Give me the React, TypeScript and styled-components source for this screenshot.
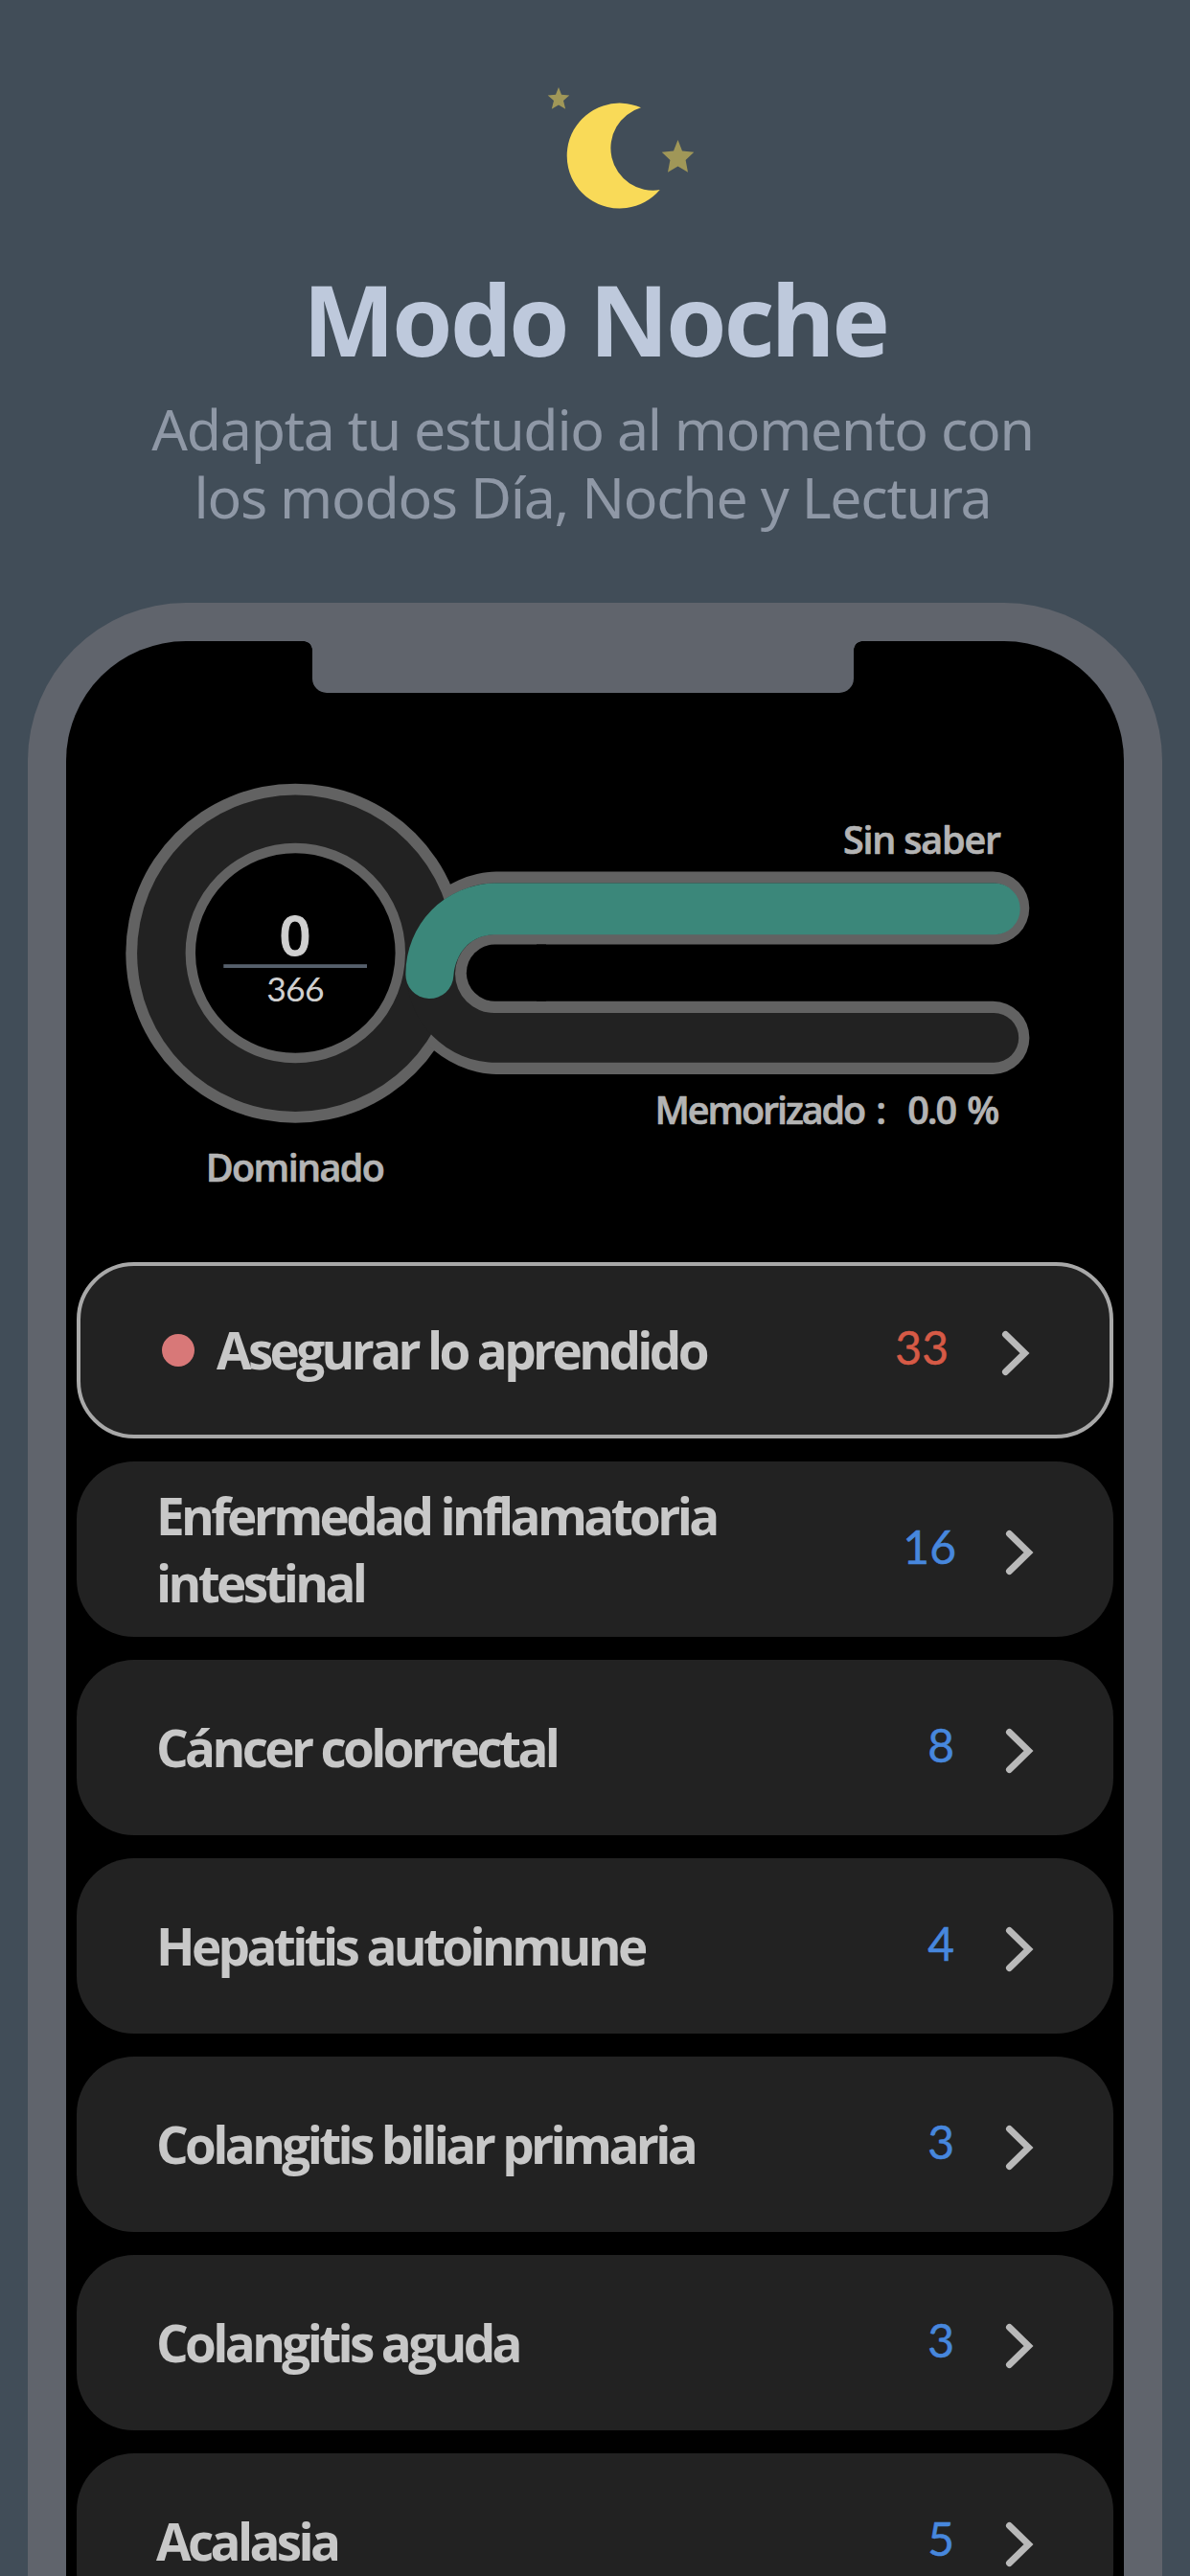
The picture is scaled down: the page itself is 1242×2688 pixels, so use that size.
import React, {FC} from 'react';
import styled, {createGlobalStyle} from 'styled-components';

const GlobalStyle = createGlobalStyle`
  body {
    margin: 0;
    background-color: #414d58;
  }
`;

const Page = styled.div`
  box-sizing: border-box;
  width: 1242px;
  height: 2688px;
  overflow: hidden;
  background-color: #414d58;
  font-family: 'Open Sans', 'Noto Sans', sans-serif;
`;

const Header = styled.header`
  box-sizing: border-box;
  height: 629px;
  padding-top: 90px;
  display: flex;
  flex-direction: column;
  align-items: center;
`;

const MoonIcon = styled.svg`
  flex: none;
  display: block;
  width: 154px;
  height: 129px;
  margin-left: 54px;
`;

const Title = styled.h1`
  margin: 54px 0 0;
  color: #bec9dc;
  font-family: 'Noto Sans', sans-serif;
  font-size: 102px;
  font-weight: 700;
  line-height: 120px;
  letter-spacing: -3.1px;
  white-space: nowrap;
`;

const Subtitle = styled.p`
  margin: 19px 0 0;
  padding-right: 5px;
  color: #8f98a6;
  font-family: 'Noto Sans', sans-serif;
  font-size: 59px;
  line-height: 71px;
  letter-spacing: -1.25px;
  text-align: center;
  white-space: nowrap;
`;

const Phone = styled.main`
  box-sizing: border-box;
  height: 2200px;
  margin: 0 29px;
  border: 40px solid #60646c;
  border-bottom: none;
  border-radius: 165px 165px 0 0;
  background-color: #000;
`;

const Notch = styled.div`
  position: relative;
  width: 565px;
  height: 54px;
  margin-left: 257px;
  border-radius: 0 0 15px 15px;
  background-color: #60646c;

  &::before,
  &::after {
    content: '';
    position: absolute;
    top: 0;
    width: 9px;
    height: 9px;
  }

  &::before {
    right: 100%;
    background: radial-gradient(circle at 0 100%, transparent 8.5px, #60646c 9px);
  }

  &::after {
    left: 100%;
    background: radial-gradient(circle at 100% 100%, transparent 8.5px, #60646c 9px);
  }
`;

const Chart = styled.svg`
  display: block;
  width: 1104px;
  height: 594px;
`;

const List = styled.div`
  display: flex;
  flex-direction: column;
  gap: 24px;
  padding: 0 11px;
`;

const Card = styled.div<{$outlined?: boolean}>`
  box-sizing: border-box;
  flex: none;
  display: flex;
  align-items: center;
  height: ${({$outlined}) => ($outlined ? 184 : 183)}px;
  padding-left: ${({$outlined}) => ($outlined ? 85 : 83)}px;
  padding-right: 83px;
  border: ${({$outlined}) => ($outlined ? '4px solid #a8a8a8' : 'none')};
  border-radius: 60px;
  background-color: #222;
`;

const Dot = styled.span`
  flex: none;
  width: 34px;
  height: 34px;
  margin-right: 23px;
  border-radius: 50%;
  background-color: #d87878;
`;

const Name = styled.span`
  width: 640px;
  color: #c8c8c8;
  font-size: 53px;
  font-weight: 700;
  line-height: 70px;
  letter-spacing: -3.65px;
`;

const Count = styled.span<{$pending?: boolean; $wide: boolean}>`
  margin-left: auto;
  margin-right: ${({$pending, $wide}) => ($pending ? 55 : $wide ? 51 : 53)}px;
  padding-bottom: 6px;
  color: ${({$pending}) => ($pending ? '#d65a46' : '#4787dd')};
  font-family: Lato, sans-serif;
  font-size: 48px;
  line-height: 60px;
  -webkit-text-stroke: 0.5px currentColor;
`;

const Arrow = styled.svg`
  flex: none;
  display: block;
  width: 30px;
  height: 48px;
  margin-top: 6px;
`;

interface ITopic {
  name: string;
  count: number;
  pending?: boolean;
}

const topics: ITopic[] = [
  {name: 'Asegurar lo aprendido', count: 33, pending: true},
  {name: 'Enfermedad inflamatoria intestinal', count: 16},
  {name: 'Cáncer colorrectal', count: 8},
  {name: 'Hepatitis autoinmune', count: 4},
  {name: 'Colangitis biliar primaria', count: 3},
  {name: 'Colangitis aguda', count: 3},
  {name: 'Acalasia', count: 5},
];

const Moon: FC = () => (
  <MoonIcon viewBox="571 90 154 129">
    <path
      d="M669 112.3 A55 55 0 1 0 688.7 198.1 A44.1 44.1 0 0 1 669 112.3 Z"
      fill="#f9da58"
    />
    <g fill="#a09758">
      <path d="M583 91 L586 98.8 L594.3 99.4 L588 104.9 L590.2 113.7 L583 109.5 L575.8 113.7 L578 104.9 L571.7 99.4 L580 98.8 Z"/>
      <path d="M707.5 146 L712 157.6 L724.3 158.7 L715.6 166.9 L718 179.8 L707.5 173.5 L697 179.8 L699.4 166.9 L690.7 158.7 L703 157.6 Z"/>
    </g>
  </MoonIcon>
);

const Progress: FC = () => (
  <Chart viewBox="69 723 1104 594">
    {/* grey outline of the ring and of the two arms */}
    <g fill="#626262">
      <circle cx="308.3" cy="994.7" r="177"/>
      <path d="M518 909.5 H1036.3 a38 38 0 0 1 0 76 H518 V1044.8 H1036.3 a38 38 0 0 1 0 76.2 H518 A105.8 105.8 0 0 1 518 909.5 Z"/>
    </g>
    <g fill="#222">
      <circle cx="308.3" cy="994.7" r="165.2"/>
      <path d="M518 921.5 H1037 a26.8 26.8 0 0 1 0 53.6 H518 V1057 H1037.3 a25.9 25.9 0 0 1 0 51.8 H518 A93.6 93.6 0 0 1 518 921.5 Z"/>
    </g>
    <path d="M516 975 A41 41 0 0 0 516 1057 H560 V975 Z" fill="#626262"/>
    <path d="M516.5 985.5 A29.6 29.6 0 0 0 516.5 1044.8 H570 V985.5 Z" fill="#000"/>
    <circle cx="308.3" cy="994.5" r="109.5" fill="#000" stroke="#626262" strokeWidth="10.4"/>
    <path
      d="M423.4 1016 A94.5 94.5 0 0 1 516 921.5 H1037.8 a26.9 26.9 0 0 1 0 53.8 H516 C494 975.3 476 991 473.4 1018 A25 25 0 0 1 423.4 1016 Z"
      fill="#3b877a"
    />
    <rect x="233.3" y="1006.2" width="149.7" height="3.8" fill="#56606c"/>
    <g fill="#d0d0d0" textAnchor="middle">
      <text x="308" y="996.7" fontSize="57.5" fontWeight="600" stroke="#d0d0d0" strokeWidth="1">0</text>
      <text x="308" y="1045.2" fontFamily="Lato, sans-serif" fontSize="35.5" letterSpacing="-0.8">366</text>
    </g>
    <g fill="#b4b4b4" stroke="#b4b4b4" strokeWidth="0.7" strokeLinejoin="round" fontSize="39.5" fontWeight="600">
      <text x="214.8" y="1232.7" textLength="187">Dominado</text>
      <text x="880" y="890.7" textLength="165">Sin saber</text>
      <text x="683.4" y="1172.5" textLength="360" wordSpacing="4">Memorizado :&nbsp; 0.0 %</text>
    </g>
  </Chart>
);

const App: FC = () => {
  return (
    <>
      <GlobalStyle/>
      <Page>
        <Header>
          <Moon/>
          <Title>Modo Noche</Title>
          <Subtitle>
            Adapta tu estudio al momento con
            <br/>
            los modos Día, Noche y Lectura
          </Subtitle>
        </Header>
        <Phone>
          <Notch/>
          <Progress/>
          <List>
            {topics.map(({name, count, pending}) => (
              <Card key={name} $outlined={pending}>
                {pending && <Dot/>}
                <Name>{name}</Name>
                <Count $pending={pending} $wide={count > 9}>{count}</Count>
                <Arrow viewBox="0 0 30 48">
                  <path
                    d="M4.5 4.5 L24.5 24 L4.5 43.5"
                    fill="none"
                    stroke="#b9b9b9"
                    strokeWidth="7"
                    strokeLinecap="round"
                  />
                </Arrow>
              </Card>
            ))}
          </List>
        </Phone>
      </Page>
    </>
  );
};

export default App;
